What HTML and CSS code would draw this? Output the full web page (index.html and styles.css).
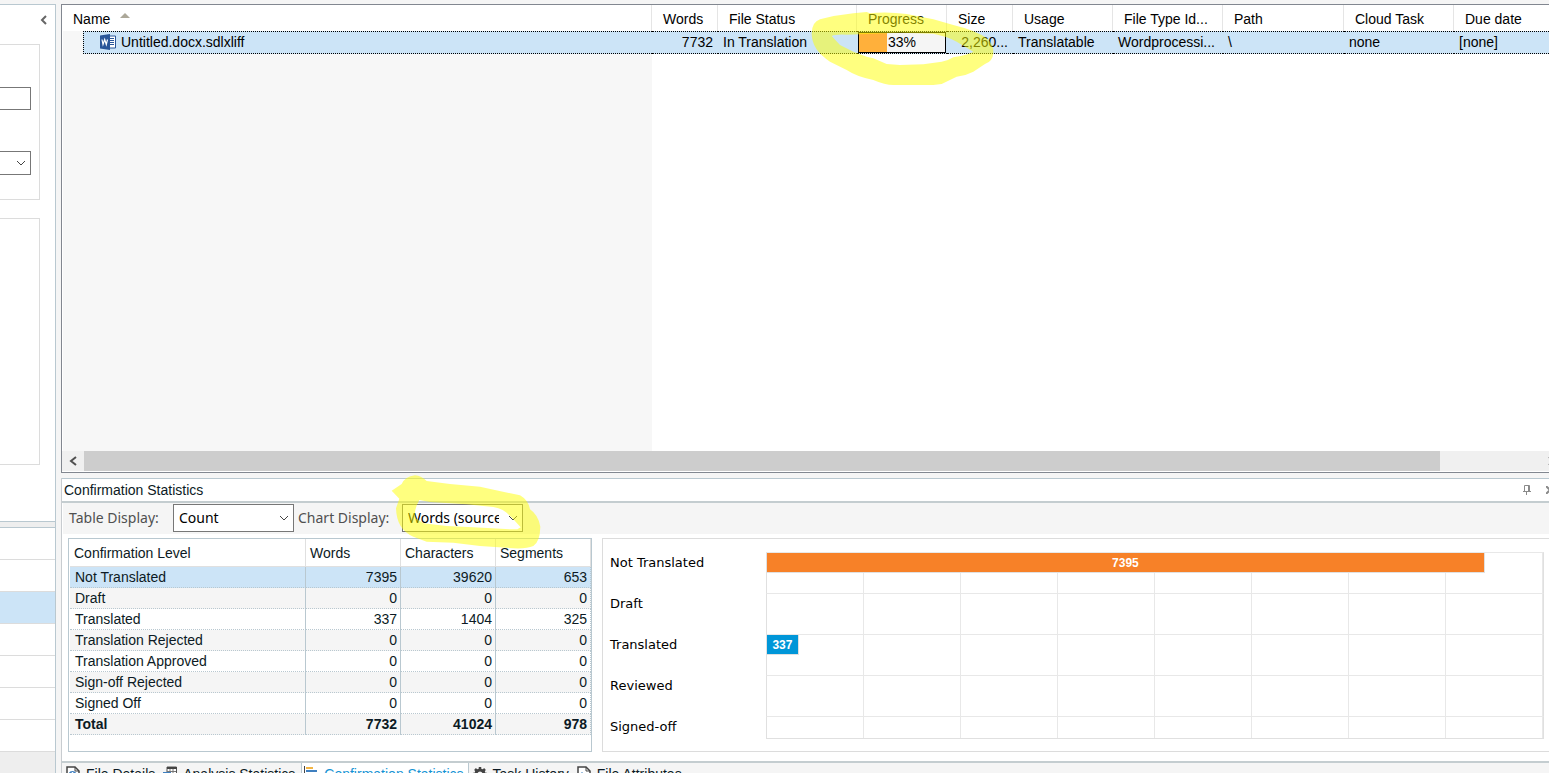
FILE: index.html
```html
<!DOCTYPE html>
<html lang="en">

<head>
    <title>Files</title>
    <meta charset="UTF-8">
    <meta name="viewport" content="width=device-width, initial-scale=1.0">
    <link rel="stylesheet" href="styles.css">
</head>

<body>
    <aside class="sidebar">
        <div class="sidebar-top">
            <button class="collapse" aria-label="Collapse">
                <svg width="8" height="10" viewBox="0 0 8 10"><path d="M6 1L2 5l4 4" fill="none" stroke="#666" stroke-width="2" /></svg>
            </button>
            <div class="group group-filter">
                <input type="text" class="side-input" aria-label="Search">
                <div class="select-box side-select">
                    <select aria-label="Filter"><option></option></select>
                    <svg class="arrow" width="10" height="6" viewBox="0 0 10 6"><path d="M1 1l4 4 4-4" fill="none" stroke="#444" /></svg>
                </div>
            </div>
            <div class="group group-details"></div>
        </div>
        <nav class="views">
            <a href="#" aria-label="Welcome"></a>
            <a href="#" aria-label="Projects"></a>
            <a href="#" aria-label="Files" class="selected"></a>
            <a href="#" aria-label="Reports"></a>
            <a href="#" aria-label="Editor"></a>
            <a href="#" aria-label="Alignment"></a>
            <a href="#" aria-label="Memories"></a>
        </nav>
    </aside>

    <main class="main">
        <section class="file-list">
            <div class="file-area">
                <table class="files">
                    <colgroup>
                        <col class="c-name">
                        <col class="c-words">
                        <col class="c-status">
                        <col class="c-progress">
                        <col class="c-size">
                        <col class="c-usage">
                        <col class="c-type">
                        <col class="c-path">
                        <col class="c-cloud">
                        <col>
                    </colgroup>
                    <thead>
                        <tr>
                            <th>Name <svg class="sort" width="10" height="5" viewBox="0 0 10 5"><path d="M0 5l5-5 5 5z" fill="#aca899" /></svg></th>
                            <th>Words</th>
                            <th>File Status</th>
                            <th>Progress</th>
                            <th>Size</th>
                            <th>Usage</th>
                            <th>File Type Id...</th>
                            <th>Path</th>
                            <th>Cloud Task</th>
                            <th>Due date</th>
                        </tr>
                    </thead>
                    <tbody>
                        <tr>
                            <td class="name-cell">
                                <div class="file-name">
                                    <svg width="16" height="16" viewBox="0 0 16 16">
                                        <path d="M8 2h7.500v12H8z" fill="#fff" stroke="#2a5699" />
                                        <path d="M10 4.500h4M10 6.500h4M10 8.500h4M10 10.500h4" stroke="#2a5699" />
                                        <path d="M0 1.500L10 0v16L0 14.500z" fill="#2a5699" />
                                        <path d="M2 5.500l1 5 1.700-5 1.600 5 1.200-5" fill="none" stroke="#fff" stroke-width="1.200" />
                                    </svg>
                                    <span>Untitled.docx.sdlxliff</span>
                                </div>
                            </td>
                            <td class="num">7732</td>
                            <td>In Translation</td>
                            <td class="progress-cell">
                                <div class="progress">
                                    <div class="progress-fill" style="width: 33%"></div>
                                    <span>33%</span>
                                </div>
                            </td>
                            <td class="num">2,260...</td>
                            <td>Translatable</td>
                            <td>Wordprocessi...</td>
                            <td>\</td>
                            <td>none</td>
                            <td>[none]</td>
                        </tr>
                    </tbody>
                </table>
            </div>
            <div class="scrollbar">
                <button aria-label="Scroll left"><svg width="8" height="10" viewBox="0 0 8 10"><path d="M7 1L2 5l5 4" fill="none" stroke="#505050" stroke-width="2" /></svg></button>
                <div class="thumb"></div>
                <div class="track"></div>
                <button aria-label="Scroll right"><svg width="8" height="10" viewBox="0 0 8 10"><path d="M1 1l5 4-5 4" fill="none" stroke="#505050" stroke-width="2" /></svg></button>
            </div>
        </section>

        <section class="stats">
            <header class="stats-title">
                <h2>Confirmation Statistics</h2>
                <button aria-label="Pin"><svg width="8" height="10" viewBox="0 0 8 10"><path d="M1.500 6V.5h5V6M5.500 1v5M0 6.500h8M3.500 7v3" fill="none" stroke="#8a8a8a" /></svg></button>
                <button aria-label="Close"><svg width="8" height="8" viewBox="0 0 8 8"><path d="M0 0l8 8M8 0L0 8" stroke="#8a8a8a" stroke-width="2" /></svg></button>
            </header>
            <div class="toolbar">
                <label for="tableDisplay">Table Display:</label>
                <div class="select-box">
                    <select id="tableDisplay"><option>Count</option></select>
                    <svg class="arrow" width="10" height="6" viewBox="0 0 10 6"><path d="M1 1l4 4 4-4" fill="none" stroke="#444" /></svg>
                </div>
                <label for="chartDisplay">Chart Display:</label>
                <div class="select-box">
                    <select id="chartDisplay"><option>Words (source)</option></select>
                    <svg class="arrow" width="10" height="6" viewBox="0 0 10 6"><path d="M1 1l4 4 4-4" fill="none" stroke="#444" /></svg>
                </div>
            </div>
            <div class="panels">
                <div class="table-box">
                    <table class="levels">
                        <colgroup>
                            <col>
                            <col class="c-count">
                            <col class="c-count">
                            <col class="c-count">
                        </colgroup>
                        <thead>
                            <tr><th>Confirmation Level</th><th>Words</th><th>Characters</th><th>Segments</th></tr>
                        </thead>
                        <tbody>
                            <tr class="selected"><td>Not Translated</td><td>7395</td><td>39620</td><td>653</td></tr>
                            <tr><td>Draft</td><td>0</td><td>0</td><td>0</td></tr>
                            <tr><td>Translated</td><td>337</td><td>1404</td><td>325</td></tr>
                            <tr><td>Translation Rejected</td><td>0</td><td>0</td><td>0</td></tr>
                            <tr><td>Translation Approved</td><td>0</td><td>0</td><td>0</td></tr>
                            <tr><td>Sign-off Rejected</td><td>0</td><td>0</td><td>0</td></tr>
                            <tr><td>Signed Off</td><td>0</td><td>0</td><td>0</td></tr>
                            <tr class="total"><td>Total</td><td>7732</td><td>41024</td><td>978</td></tr>
                        </tbody>
                    </table>
                </div>
                <div class="chart">
                    <div class="chart-row">
                        <span class="chart-label">Not Translated</span>
                        <div class="chart-track"><div class="bar orange" style="width: 92.5%">7395</div></div>
                    </div>
                    <div class="chart-row">
                        <span class="chart-label">Draft</span>
                        <div class="chart-track"></div>
                    </div>
                    <div class="chart-row">
                        <span class="chart-label">Translated</span>
                        <div class="chart-track"><div class="bar blue" style="width: 4.1%">337</div></div>
                    </div>
                    <div class="chart-row">
                        <span class="chart-label">Reviewed</span>
                        <div class="chart-track"></div>
                    </div>
                    <div class="chart-row">
                        <span class="chart-label">Signed-off</span>
                        <div class="chart-track"></div>
                    </div>
                </div>
            </div>
        </section>

        <nav class="tabs">
            <a href="#">
                <svg width="14" height="16" viewBox="0 0 14 16">
                    <path d="M1 1h8l4 4v10H1z" fill="#fff" stroke="#444" stroke-width="1.500" />
                    <path d="M9 1v4h4" fill="none" stroke="#444" />
                    <circle cx="6.500" cy="9" r="4" fill="#3f7fbf" />
                    <path d="M6.500 6v1.500M6.500 8.500V12" stroke="#fff" stroke-width="1.500" />
                </svg>
                File Details
            </a>
            <a href="#">
                <svg width="14" height="16" viewBox="0 0 14 16">
                    <path d="M4 1h9.500v12H4z" fill="#fff" stroke="#555" />
                    <path d="M4 1h10v2H4z" fill="#444" />
                    <path d="M7 3v10M10 3v10M4 5.500h9M4 8.500h9" stroke="#777" />
                    <path d="M0 6h8v8H0z" fill="#3f7fbf" />
                    <path d="M1 8h5M1 11h5" stroke="#fff" />
                </svg>
                Analysis Statistics
            </a>
            <a href="#" class="active">
                <svg width="14" height="16" viewBox="0 0 14 16">
                    <path d="M.5 0v16" stroke="#444" />
                    <path d="M2 2h7M2 8h9" stroke="#f2b544" stroke-width="2" />
                    <path d="M2 5h11M2 11h5" stroke="#3f7fbf" stroke-width="2" />
                </svg>
                Confirmation Statistics
            </a>
            <a href="#">
                <svg width="14" height="16" viewBox="0 0 14 16">
                    <circle cx="7" cy="8" r="4" fill="none" stroke="#444" stroke-width="3" />
                    <path d="M7 1v3M7 12v3M0 8h3M11 8h3M2 3l2 2M10 11l2 2M12 3l-2 2M4 11l-2 2" stroke="#444" stroke-width="2.500" />
                </svg>
                Task History
            </a>
            <a href="#">
                <svg width="14" height="16" viewBox="0 0 14 16">
                    <path d="M1 1h8l4 4v10H1z" fill="#fff" stroke="#444" stroke-width="1.500" />
                    <path d="M9 1v4h4" fill="none" stroke="#444" />
                    <path d="M4 7v5M4 7h2M10 7v5M8 12h2" fill="none" stroke="#3f7fbf" />
                </svg>
                File Attributes
            </a>
        </nav>
    </main>

    <!-- marker strokes drawn over the list and the toolbar -->
    <svg class="marker marker-progress" viewBox="0 0 1200 330" aria-hidden="true">
        <path fill-rule="evenodd" d="M515 100Q516 66 540 58Q590 45 640 40L680 36L690 40Q740 34 800 42L880 58L940 75Q1010 92 1040 115Q1062 135 1060 160Q1058 185 1035 192L1000 215Q975 228 950 230L905 252L880 255H760Q735 255 700 240Q650 230 620 210L570 185Q515 150 515 100Z M575 108Q588 102 620 104L780 98L880 101Q925 110 950 125L1000 155Q990 163 940 172Q925 182 905 185L850 193L780 195L740 192L700 175L680 170L640 155L600 135Z" />
    </svg>
    <svg class="marker marker-words" viewBox="0 0 1020 303" aria-hidden="true">
        <path fill-rule="evenodd" d="M335 62L365 42Q375 20 405 16Q425 18 440 33L510 42L600 50L655 62L720 76Q745 90 750 118Q775 135 781 170Q780 215 760 228Q740 237 700 235L600 228L520 218L440 215L400 200Q350 180 348 115L358 86Z M418 90Q400 120 407 145L430 160L500 168L580 172L690 178H712L722 172L700 148L680 128Q665 115 640 111L560 103L450 96Z" />
    </svg>
</body>

</html>
```
FILE: styles.css
```css
* {
    box-sizing: border-box;
}

body {
    margin: 0;
    height: 100vh;
    overflow: hidden;
    display: flex;
    gap: 5px;
    background-color: #f5f5f5;
    color: #0c1a24;
    font-family: "Liberation Sans", Arial, sans-serif;
    font-size: 14px;
}

button {
    border: none;
    padding: 0;
    background: none;
    display: flex;
    align-items: center;
    justify-content: center;
}

a {
    color: inherit;
    text-decoration: none;
}

table {
    border-spacing: 0;
    table-layout: fixed;
    width: 100%;
}

th {
    font-weight: normal;
    text-align: left;
}

th,
td {
    padding: 0;
    white-space: nowrap;
    overflow: hidden;
}

/* sidebar */
.sidebar {
    width: 56px;
    flex-shrink: 0;
    margin-top: 4px;
    border-top: 1px solid #b9c8d0;
    border-right: 1px solid #b9c8d0;
    background-color: #eee;
    display: flex;
    flex-direction: column;
}

.sidebar-top {
    flex: 1;
    background-color: white;
    border-bottom: 1px solid #b9c8d0;
    margin-bottom: 5px;
}

.collapse {
    margin: 10px 7px 19px auto;
}

.group {
    width: 40px;
    border: 1px solid #dcdcdc;
    border-left: none;
}

.group-filter {
    height: 156px;
    padding-top: 42px;
    margin-bottom: 18px;
}

.group-details {
    height: 247px;
}

.side-input {
    display: block;
    width: 31px;
    height: 23px;
    border: 1px solid #777;
    border-left: none;
    margin-bottom: 41px;
}

.views {
    background-color: white;
    border-top: 1px solid #b9c8d0;
    margin-bottom: 21px;
}

.views a {
    display: block;
    height: 32px;
    border-bottom: 1px solid #dcdcdc;
}

.views .selected {
    background-color: #cce4f7;
}

/* drop-downs */
.select-box {
    position: relative;
    width: 121px;
    height: 28px;
}

.select-box select {
    appearance: none;
    width: 100%;
    height: 100%;
    border: 1px solid #777;
    border-radius: 0;
    background-color: white;
    color: black;
    padding: 0 23px 0 5px;
    font-family: "Noto Sans", sans-serif;
    font-size: 14px;
}

.arrow {
    position: absolute;
    right: 5px;
    top: 11px;
    pointer-events: none;
}

.side-select {
    width: 31px;
    height: 24px;
}

.side-select select {
    border-left: none;
}

.side-select .arrow {
    top: 9px;
}

/* main area runs past the right and bottom edge of the window */
.main {
    flex: 1;
    height: calc(100vh + 12px);
    margin-right: -17px;
    padding-top: 4px;
    display: flex;
    flex-direction: column;
}

.file-list {
    flex: 1;
    display: flex;
    flex-direction: column;
    border: 1px solid #828790;
    background-color: white;
    padding-bottom: 1px;
    margin-bottom: 5px;
}

.file-area {
    flex: 1;
    background: linear-gradient(#f7f7f7, #f7f7f7) no-repeat 1px 0 / 589px 100%;
}

.c-name {
    width: 590px;
}

.c-words,
.c-size {
    width: 66px;
}

.c-status {
    width: 139px;
}

.c-progress {
    width: 90px;
}

.c-usage {
    width: 100px;
}

.c-type,
.c-cloud {
    width: 110px;
}

.c-path {
    width: 121px;
}

.files {
    color: black;
}

.files th {
    height: 26px;
    padding: 2px 0 0 11px;
    background-color: white;
    border-right: 1px solid #e5e5e5;
}

.files td {
    height: 23px;
    padding: 0 5px 2px;
    background-color: #cce4f7;
    border-top: 1px dotted black;
    border-bottom: 1px dotted black;
}

.sort {
    margin-left: 6px;
    vertical-align: 6px;
}

.files .name-cell {
    padding: 0 0 0 21px;
    background: none;
    border: none;
}

.file-name {
    height: 23px;
    padding: 0 0 1px 16px;
    display: flex;
    align-items: center;
    gap: 5px;
    background-color: #cce4f7;
    border: 1px dotted black;
    border-right: none;
}

.num {
    text-align: right;
}

.files .progress-cell {
    padding: 0 1px;
}

.progress {
    position: relative;
    height: 21px;
    border: 1px solid black;
    background-color: #f5f5f5;
    text-align: center;
    line-height: 19px;
}

.progress-fill {
    position: absolute;
    top: 0;
    left: 0;
    height: 100%;
    background-color: #ffb03b;
}

.progress span {
    position: relative;
}

.scrollbar {
    height: 20px;
    display: flex;
    background-color: #f0f0f0;
}

.scrollbar button {
    width: 22px;
}

.scrollbar button:last-child {
    width: 17px;
    justify-content: flex-start;
}

.thumb {
    flex: 25;
    background-color: #cdcdcd;
}

.track {
    flex: 2;
}

/* statistics */
.stats {
    border-left: 1px solid #c8ccd0;
    border-bottom: 2px solid #c4cdd0;
    background-color: white;
}

.stats-title {
    height: 25px;
    padding: 0 12px 0 2px;
    display: flex;
    align-items: center;
    gap: 15px;
    border-top: 1px solid #b9c8d0;
    border-bottom: 2px solid #c4cdd0;
}

.stats-title h2 {
    flex: 1;
    margin: 0;
    font-size: 14px;
    font-weight: normal;
}

.toolbar {
    display: flex;
    align-items: center;
    height: 31px;
    margin-left: 1px;
    padding: 0 0 2px 6px;
    background-color: #f5f5f5;
    color: #505050;
    font-family: "Noto Sans", sans-serif;
}

.toolbar label {
    width: 104px;
}

.toolbar .select-box + label {
    padding-left: 4px;
    width: 108px;
}

.panels {
    display: flex;
    gap: 10px;
    padding: 4px 12px 9px 6px;
}

.table-box {
    width: 524px;
    height: 214px;
    border: 1px solid #b9c8d0;
    padding: 0 0 0 1px;
}

.c-count {
    width: 95px;
}

.levels th {
    height: 28px;
    padding: 0 0 0 4px;
    border-right: 1px solid #e0e0e0;
    border-bottom: 1px solid #e0e0e0;
}

.levels td {
    height: 21px;
    padding: 0 3px 0 5px;
    border-right: 1px solid #b9c8d0;
    border-bottom: 1px dotted #b9c8d0;
    text-align: right;
}

.levels td:first-child {
    text-align: left;
}

.levels td:last-child {
    border-right-style: dotted;
}

.levels tr:nth-child(even) td {
    background-color: #f5f5f5;
}

.levels .selected td {
    background-color: #cce4f7;
}

.total td {
    font-weight: bold;
}

.chart {
    flex: 1;
    border: 1px solid #dcdcdc;
    padding: 13px 9px 0 7px;
    color: black;
    font-family: "DejaVu Sans", Verdana, sans-serif;
    font-size: 13px;
}

.chart-row {
    display: flex;
    height: 41px;
}

.chart-row:last-child {
    height: 23px;
}

.chart-label {
    width: 156px;
    line-height: 21px;
}

.chart-track {
    flex: 1;
    border: 1px solid #e0e0e0;
    border-top-color: #e8e8e8;
    border-bottom: none;
    background: linear-gradient(to left, #e8e8e8 1px, transparent 1px) 0 0 / 12.5% 100%;
}

.chart-row:last-child .chart-track {
    border-bottom: 1px solid #e0e0e0;
}

.bar {
    height: 20px;
    border-right: 1px solid #e0e0e0;
    border-bottom: 1px solid #e0e0e0;
    color: white;
    font-family: "Liberation Sans", Arial, sans-serif;
    font-size: 12px;
    font-weight: bold;
    line-height: 20px;
    text-align: center;
}

.orange {
    background-color: #f78128;
}

.blue {
    background-color: #0096d8;
}

/* bottom tabs */
.tabs {
    height: 22px;
    display: flex;
    border-left: 1px solid #c8ccd0;
}

.tabs a {
    display: flex;
    align-items: center;
    gap: 6px;
    padding: 0 4px;
}

.tabs .active {
    margin-left: 2px;
    background-color: white;
    color: #1593d4;
    border: 1px solid #b9c8d0;
    border-top: none;
    padding: 0 4px 0 2px;
}

/* yellow marker */
.marker {
    position: absolute;
    pointer-events: none;
    fill: rgba(255, 255, 0, 0.5);
}

.marker-progress {
    left: 640px;
    top: 0;
    width: 400px;
}

.marker-words {
    left: 280px;
    top: 470px;
    width: 340px;
}
```
